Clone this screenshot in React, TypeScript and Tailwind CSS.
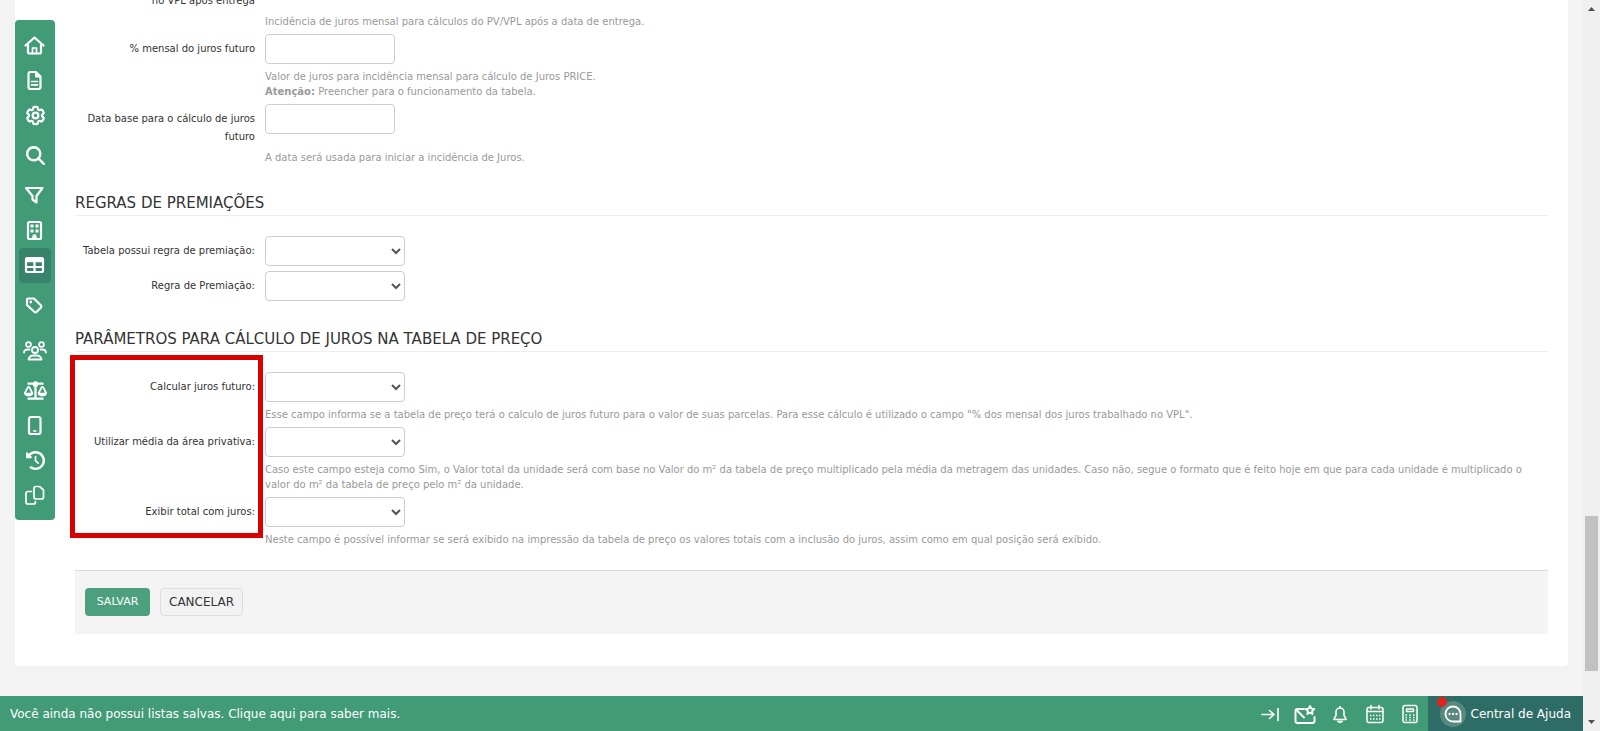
import { useId, type ReactNode } from 'react';
import { FaBalanceScale } from 'react-icons/fa';
import { FaClockRotateLeft, FaMagnifyingGlass } from 'react-icons/fa6';
import { HiOutlineCog6Tooth } from 'react-icons/hi2';

type IconProps = { children: ReactNode; width?: number };

function Icon({ children, width = 2.2 }: IconProps) {
  return (
    <svg
      className="size-6"
      viewBox="0 0 24 24"
      fill="none"
      stroke="currentColor"
      strokeWidth={width}
      strokeLinecap="round"
      strokeLinejoin="round"
      aria-hidden="true"
    >
      {children}
    </svg>
  );
}

const HomeIcon = () => (
  <Icon>
    <path d="M2.5 11.500 11.500 3.500l9 8" />
    <path d="M5 10v8a1.500 1.500 0 0 0 1.500 1.500h10a1.500 1.500 0 0 0 1.500-1.500v-8" />
    <path d="M9.500 19.500v-5.500h4v5.500" strokeWidth="1.700" />
  </Icon>
);

const DocumentIcon = () => (
  <Icon>
    <path d="M5.500 5a2 2 0 0 1 2-2h5.500l4.500 4.500v10.500a2 2 0 0 1-2 2h-8a2 2 0 0 1-2-2z" />
    <path d="M12.500 3v5h5z" fill="currentColor" strokeWidth="1" />
    <path d="M8.500 12.500h6M8.500 15.800h6" strokeWidth="1.700" />
  </Icon>
);

const FilterIcon = () => (
  <Icon>
    <path d="M3 4h16.500l-6 8v6.500l-4-3v-3.500z" />
  </Icon>
);

const BuildingIcon = () => (
  <Icon>
    <rect x="5" y="3" width="13" height="17" rx="1.500" />
    <path
      d="M7.500 5.500h3v3h-3zM12.500 5.500h3v3h-3zM7.500 10.500h3v3h-3zM12.500 10.500h3v3h-3z"
      fill="currentColor"
      stroke="none"
    />
    <path d="M9.300 20.500v-3a2.200 2.200 0 0 1 4.400 0v3z" fill="currentColor" stroke="none" />
  </Icon>
);

const TableIcon = () => (
  <Icon>
    <rect x="3" y="4" width="17" height="14" rx="1.500" />
    <path d="M3 6h17" strokeWidth="4.500" strokeLinecap="butt" />
    <path d="M3 13h17M11.500 8v10" />
  </Icon>
);

const TagIcon = () => (
  <Icon>
    <path d="M4 5.500a1 1 0 0 1 1-1h6l7 7a1.500 1.500 0 0 1 0 2l-4.500 4.500a1.500 1.500 0 0 1-2 0l-7.500-7z" />
    <circle cx="7.800" cy="8" r="1.400" fill="currentColor" stroke="none" />
  </Icon>
);

const UsersIcon = () => (
  <Icon width={1.800}>
    <circle cx="12" cy="11" r="3" />
    <circle cx="5.500" cy="5.500" r="2.400" />
    <circle cx="18.500" cy="5.500" r="2.400" />
    <path d="M5.500 20.500a5 5 0 0 1 5-4h3a5 5 0 0 1 5 4z" />
    <path d="M1 13.500a3.500 3.500 0 0 1 3.500-3h2M23 13.500a3.500 3.500 0 0 0-3.500-3h-2" />
  </Icon>
);

const PhoneIcon = () => (
  <Icon>
    <rect x="6" y="3" width="11.500" height="17" rx="2" />
    <path d="M10.500 17h2.500" strokeWidth="1.300" />
  </Icon>
);

const CopyIcon = () => (
  <Icon width={1.700}>
    <path d="M11 4.500a2 2 0 0 1 2-2h3.500l4 3.500v7a2 2 0 0 1-2 2h-5.500a2 2 0 0 1-2-2z" />
    <path d="M8.500 7.500H5a2 2 0 0 0-2 2v8.500a2 2 0 0 0 2 2h5.500a2 2 0 0 0 2-2v-.500" />
  </Icon>
);

const ArrowToEndIcon = () => (
  <Icon width={1.600}>
    <path d="M4 12.500h12M11.500 8.500l4.500 4-4.500 4M20 6.500v12" />
  </Icon>
);

const MailStarIcon = () => (
  <Icon width={1.900}>
    <path d="M11 7H4.500a2 2 0 0 0-2 2v10a2 2 0 0 0 2 2h15a2 2 0 0 0 2-2v-4" />
    <path d="M3.500 8l7.500 7.500" />
    <path d="M17 4l1.300 2.600 2.900.400-2.100 2.100.500 2.900-2.600-1.400-2.600 1.400.500-2.900-2.100-2.100 2.900-.400z" />
  </Icon>
);

const BellIcon = () => (
  <Icon width={1.600}>
    <path d="M12 5.500V4.500M12 6a4 4 0 0 0-4 4v3c0 1.500-2 2.500-2 4.500h12c0-2-2-3-2-4.500v-3a4 4 0 0 0-4-4z" />
    <path d="M9.500 19.500a2.600 1.600 0 0 0 5 0z" fill="currentColor" strokeWidth="1" />
  </Icon>
);

const CalendarIcon = () => (
  <Icon width={1.500}>
    <rect x="4" y="5.500" width="16" height="15" rx="2" />
    <path d="M4 9.500h16M8 3.500v3.500M16 3.500v3.500" />
    <path
      d="M7 13.500h1.500M10 13.500h1.500M13 13.500h1.500M16 13.500h1.500M7 17h1.500M10 17h1.500M13 17h1.500M16 17h1.500"
      strokeLinecap="butt"
    />
  </Icon>
);

const CalculatorIcon = () => (
  <Icon width={1.500}>
    <rect x="5" y="3.500" width="14" height="17" rx="2" />
    <rect x="8.500" y="7" width="7" height="2.500" />
    <path
      d="M7.500 13h1.500M11.300 13h1.500M15 13h1.500M7.500 15.500h1.500M11.300 15.500h1.500M15 15.500h1.500M7.500 18h1.500M11.300 18h1.500M15 18h1.500"
      strokeLinecap="butt"
    />
  </Icon>
);

const ChatIcon = () => (
  <Icon width={1.800}>
    <path d="M19.500 19.500h-7.500a7.500 7.500 0 1 1 7.500-7.500z" />
    <path d="M8.500 12h.100M12 12h.100M15.500 12h.100" strokeWidth="2.300" />
  </Icon>
);

const menu = [
  { name: 'Início', icon: <HomeIcon /> },
  { name: 'Documentos', icon: <DocumentIcon /> },
  { name: 'Configurações', icon: <HiOutlineCog6Tooth className="size-[23px] stroke-[2.3px]" /> },
  { name: 'Buscar', icon: <FaMagnifyingGlass className="size-[19px]" />, space: 'mt-[5px]' },
  { name: 'Filtros', icon: <FilterIcon />, space: 'mt-[5px]' },
  { name: 'Empreendimentos', icon: <BuildingIcon /> },
  { name: 'Tabelas', icon: <TableIcon />, active: true },
  { name: 'Etiquetas', icon: <TagIcon />, space: 'mt-[5px]' },
  { name: 'Clientes', icon: <UsersIcon />, space: 'mt-[10px]' },
  { name: 'Jurídico', icon: <FaBalanceScale className="size-[23px]" />, space: 'mt-[5px]' },
  { name: 'Aplicativo', icon: <PhoneIcon /> },
  { name: 'Histórico', icon: <FaClockRotateLeft className="size-[19px]" /> },
  { name: 'Copiar', icon: <CopyIcon /> },
];

const tools = [
  { name: 'Recolher', icon: <ArrowToEndIcon /> },
  { name: 'Mensagens', icon: <MailStarIcon /> },
  { name: 'Notificações', icon: <BellIcon /> },
  { name: 'Agenda', icon: <CalendarIcon /> },
  { name: 'Calculadora', icon: <CalculatorIcon /> },
];

function Sidebar() {
  return (
    <nav className="mt-5 flex w-10 shrink-0 flex-col items-center self-start rounded bg-[#419b76] pt-2 pb-[7px] text-white">
      {menu.map((item) => (
        <a
          key={item.name}
          href="#"
          aria-label={item.name}
          className={`flex h-[35px] w-8 items-center justify-center rounded ${item.space ?? ''} ${
            item.active ? 'bg-[#37836b]' : ''
          }`}
        >
          {item.icon}
        </a>
      ))}
    </nav>
  );
}

type FieldProps = { label: string; type?: 'text' | 'select' | 'none'; help?: ReactNode };

function Field({ label, type = 'select', help }: FieldProps) {
  const id = useId();
  return (
    <div className="mb-[5px] grid grid-cols-[180px_1fr] gap-x-[10px]">
      <label htmlFor={id} className="-mb-px pt-[6px] text-right text-[10px] leading-[18px] text-[#333]">
        {label}
      </label>
      {type === 'text' && (
        <input id={id} type="text" className="h-[30px] w-[130px] rounded border border-[#ccc] bg-white px-2" />
      )}
      {type === 'select' && (
        <select id={id} className="h-[30px] w-[140px] rounded border border-[#ccc] bg-white px-1 text-[13px] text-[#555]" />
      )}
      {help && (
        <p className="col-start-2 row-start-2 mt-[5px] text-[10px] leading-[15px] text-[#999]">{help}</p>
      )}
    </div>
  );
}

function Title({ children }: { children: ReactNode }) {
  return (
    <h2 className="mb-5 border-b border-[#eee] pt-[22px] text-[15px] leading-[23px] text-[#333]">{children}</h2>
  );
}

function Scrollbar() {
  return (
    <div className="flex w-[17px] shrink-0 flex-col items-center bg-[#f0f0f0]" aria-hidden="true">
      <svg className="h-[17px] w-[17px]" viewBox="0 0 17 17">
        <path d="M5 11h7L8.500 7z" fill="#505050" />
      </svg>
      <div className="grow-[499]" />
      <div className="w-[13px] grow-[155] bg-[#c1c1c1]" />
      <div className="grow-[43]" />
      <svg className="h-[17px] w-[17px]" viewBox="0 0 17 17">
        <path d="M5 6h7l-3.500 4z" fill="#505050" />
      </svg>
    </div>
  );
}

export default function App() {
  return (
    <div className="flex h-screen overflow-hidden bg-[#f3f3f3] font-['DejaVu_Sans',Verdana,sans-serif]">
      <div className="flex min-w-0 flex-1 flex-col">
        <main className="min-h-0 flex-1 overflow-hidden px-[15px]">
          <div className="flex rounded-b bg-white">
            <Sidebar />
            <form className="min-w-0 flex-1 px-5 pb-8">
              <div className="-mt-[14px]">
                <Field
                  label="no VPL após entrega"
                  type="none"
                  help="Incidência de juros mensal para cálculos do PV/VPL após a data de entrega."
                />
                <Field
                  label="% mensal do juros futuro"
                  type="text"
                  help={
                    <>
                      Valor de juros para incidência mensal para cálculo de Juros PRICE.
                      <br />
                      <strong>Atenção:</strong> Preencher para o funcionamento da tabela.
                    </>
                  }
                />
                <Field
                  label="Data base para o cálculo de juros futuro"
                  type="text"
                  help="A data será usada para iniciar a incidência de Juros."
                />
              </div>

              <Title>REGRAS DE PREMIAÇÕES</Title>
              <Field label="Tabela possui regra de premiação:" />
              <Field label="Regra de Premiação:" />

              <Title>PARÂMETROS PARA CÁLCULO DE JUROS NA TABELA DE PREÇO</Title>
              <div className="relative">
                <Field
                  label="Calcular juros futuro:"
                  help={
                    'Esse campo informa se a tabela de preço terá o calculo de juros futuro para o valor de suas parcelas. Para esse cálculo é utilizado o campo "% dos mensal dos juros trabalhado no VPL".'
                  }
                />
                <Field
                  label="Utilizar média da área privativa:"
                  help="Caso este campo esteja como Sim, o Valor total da unidade será com base no Valor do m² da tabela de preço multiplicado pela média da metragem das unidades. Caso não, segue o formato que é feito hoje em que para cada unidade é multiplicado o valor do m² da tabela de preço pelo m² da unidade."
                />
                <Field
                  label="Exibir total com juros:"
                  help="Neste campo é possível informar se será exibido na impressão da tabela de preço os valores totais com a inclusão do juros, assim como em qual posição será exibido."
                />
                <div className="pointer-events-none absolute -top-[17px] -left-[5px] h-[183px] w-[193px] border-[5px] border-[#d90000]" />
              </div>

              <div className="mt-[23px] flex gap-[10px] border-t border-[#ddd] bg-[#f4f4f4] px-[10px] pt-[17px] pb-[18px]">
                <button type="submit" className="h-7 w-[65px] rounded bg-[#4ca07e] text-[11px] text-white">
                  SALVAR
                </button>
                <button type="button" className="h-7 rounded border border-[#ddd] bg-[#f2f2f2] px-2 text-[12px] text-[#333]">
                  CANCELAR
                </button>
              </div>
            </form>
          </div>
        </main>

        <footer className="flex h-[35px] shrink-0 items-center bg-[#419b76] text-[12px] text-white">
          <a href="#" className="pl-[10px]">
            Você ainda não possui listas salvas. Clique aqui para saber mais.
          </a>
          <div className="ml-auto flex h-full">
            {tools.map((tool) => (
              <button key={tool.name} type="button" aria-label={tool.name} className="flex w-[35px] items-center justify-center">
                {tool.icon}
              </button>
            ))}
            <button type="button" className="flex items-center gap-[5px] bg-[#2e6c66] px-3">
              <span className="relative flex size-[26px] items-center justify-center rounded-full bg-[#57897f]">
                <ChatIcon />
                <span className="absolute -top-1 -left-[3px] size-[10px] rounded-full bg-[#e02424]" />
              </span>
              Central de Ajuda
            </button>
          </div>
        </footer>
      </div>
      <Scrollbar />
    </div>
  );
}
